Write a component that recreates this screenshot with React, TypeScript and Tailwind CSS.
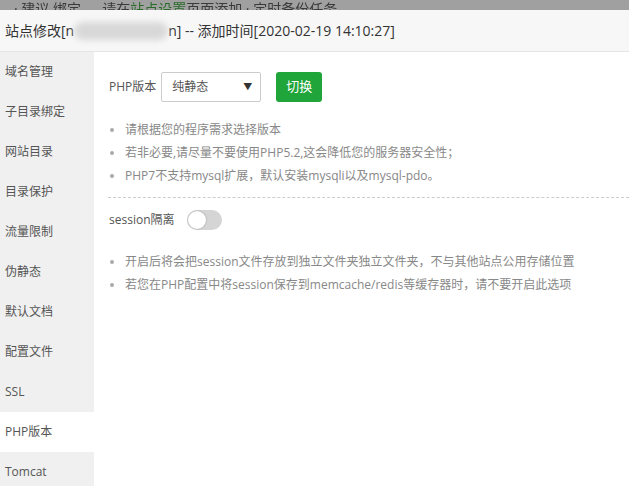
import React from 'react';

const menu = ['域名管理', '子目录绑定', '网站目录', '目录保护', '流量限制', '伪静态', '默认文档', '配置文件', 'SSL', 'PHP版本', 'Tomcat'];

const Bullet: React.FC<{ text: string }> = ({ text }) => (
    <li className="flex items-center h-[23px]">
        <span className="w-[4px] h-[4px] rounded-full bg-[#aaa] ml-[1px] mr-[11px] shrink-0" />
        <span className="whitespace-nowrap">{text}</span>
    </li>
);

const App: React.FC = () => {
    return (
        <div className="w-[629px] h-[486px] overflow-hidden bg-white flex flex-col font-['Open_Sans','Noto_Sans_CJK_SC',sans-serif]">
            {/* page behind the modal */}
            <div className="h-[10px] shrink-0 bg-[#a0a0a0] overflow-hidden relative">
                <div className="absolute left-[14px] top-[1px] text-[14px] leading-[16px] text-[#3a3a3a] blur-[0.6px] whitespace-nowrap">
                    · 建议 绑定 ， 请在<span className="text-[#2a6b2a]">站点设置</span>页面添加 · 定时备份任务
                </div>
            </div>

            <header className="h-[42px] shrink-0 bg-[#f7f7f7] border-b border-[#e5e5e5] flex items-center px-[5px] text-[14px] text-[#333] whitespace-nowrap">
                站点修改[n
                <span className="inline-block w-[94px] h-[18px] bg-[#d8d8d8] blur-[3px] rounded-full" />
                n] -- 添加时间[2020-02-19 14:10:27]
            </header>

            <div className="flex flex-1 min-h-0">
                <nav className="w-[94px] shrink-0 bg-[#f0f0f0]">
                    {menu.map(item => (
                        <div
                            key={item}
                            className={`h-[40px] leading-[40px] pl-[5px] text-[12px] text-[#555] ${item === 'PHP版本' ? 'bg-white' : ''}`}
                        >
                            {item}
                        </div>
                    ))}
                </nav>

                <main className="flex-1 pt-[20px] pl-[15px] text-[12px]">
                    <div className="flex items-center h-[30px]">
                        <span className="text-[#555] mr-[5px]">PHP版本</span>
                        <div className="w-[100px] h-[30px] border border-[#ccc] rounded-[2px] flex items-center justify-between pl-[10px] pr-[8px] text-[#555]">
                            <span>纯静态</span>
                            <span className="text-[9px] text-[#333]">▼</span>
                        </div>
                        <button className="ml-[15px] w-[46px] h-[30px] bg-[#20a53a] rounded-[3px] text-white text-[13px]">切换</button>
                    </div>

                    <ul className="mt-[16px] text-[#888]">
                        <Bullet text="请根据您的程序需求选择版本" />
                        <Bullet text="若非必要,请尽量不要使用PHP5.2,这会降低您的服务器安全性；" />
                        <Bullet text="PHP7不支持mysql扩展，默认安装mysqli以及mysql-pdo。" />
                    </ul>

                    <div className="mt-[10px] -ml-[1px] border-t border-dashed border-[#ccc]" />

                    <div className="flex items-center mt-[11px] h-[21px]">
                        <span className="text-[#555] mr-[12px]">session隔离</span>
                        <div className="w-[35px] h-[20px] rounded-full bg-[#d5d5d5] p-[1px] flex items-center">
                            <span className="w-[18px] h-[18px] rounded-full bg-white shadow-[0_0_2px_rgba(0,0,0,0.3)]" />
                        </div>
                    </div>

                    <ul className="mt-[20px] text-[#888]">
                        <Bullet text="开启后将会把session文件存放到独立文件夹独立文件夹，不与其他站点公用存储位置" />
                        <Bullet text="若您在PHP配置中将session保存到memcache/redis等缓存器时，请不要开启此选项" />
                    </ul>
                </main>
            </div>
        </div>
    );
};

export default App;
